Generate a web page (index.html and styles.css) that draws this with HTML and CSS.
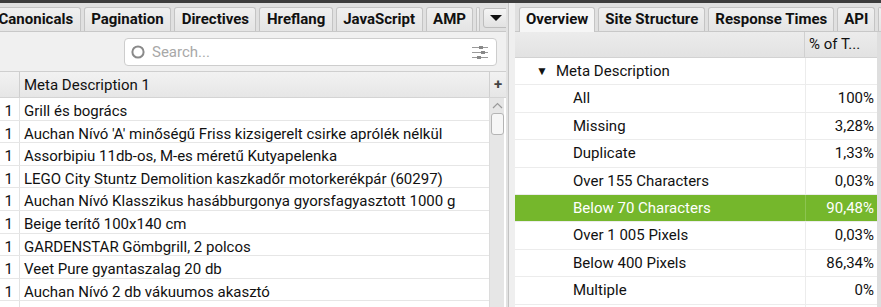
FILE: index.html
```html
<!DOCTYPE html>
<html lang="en">

<head>
    <meta charset="UTF-8">
    <meta name="viewport" content="width=device-width, initial-scale=1.0">
    <title>Meta Description</title>
    <link rel="stylesheet" href="styles.css">
</head>

<body>

    <div class="topbar"></div>

    <div class="main">

        <!-- left pane: data grid -->
        <section class="pane pane-left">
            <div class="tabs">
                <div class="tab tab-cut">Canonicals</div>
                <div class="tab">Pagination</div>
                <div class="tab">Directives</div>
                <div class="tab">Hreflang</div>
                <div class="tab">JavaScript</div>
                <div class="tab">AMP</div>
                <div class="tab tab-sliver"></div>
                <div class="tab-menu"><span class="caret"></span></div>
            </div>

            <div class="toolbar">
                <div class="search">
                    <svg class="search-icon" width="14" height="14" viewBox="0 0 14 14">
                        <circle cx="7" cy="7" r="5.6" fill="none" stroke="#8a8a8a" stroke-width="2"/>
                    </svg>
                    <span class="search-text">Search...</span>
                    <svg class="filter-icon" width="16" height="14" viewBox="0 0 16 14">
                        <g stroke="#9a9a9a" stroke-width="1">
                            <line x1="0" y1="2.5" x2="16" y2="2.5"/>
                            <line x1="0" y1="7.5" x2="16" y2="7.5"/>
                            <line x1="0" y1="12.5" x2="16" y2="12.5"/>
                        </g>
                        <rect x="7" y="1" width="4" height="3" fill="#888"/>
                        <rect x="9" y="6" width="4" height="3" fill="#888"/>
                        <rect x="5" y="11" width="4" height="3" fill="#888"/>
                    </svg>
                </div>
            </div>

            <div class="grid">
                <div class="grid-head">
                    <div class="num"></div>
                    <div class="cell">Meta Description 1</div>
                    <div class="add">+</div>
                </div>
                <div class="grid-body">
                    <div class="rows">
                        <div class="row"><div class="num">1</div><div class="cell">Grill és bogrács</div></div>
                        <div class="row"><div class="num">1</div><div class="cell">Auchan Nívó 'A' minőségű Friss kizsigerelt csirke aprólék nélkül</div></div>
                        <div class="row"><div class="num">1</div><div class="cell">Assorbipiu 11db-os, M-es méretű Kutyapelenka</div></div>
                        <div class="row"><div class="num">1</div><div class="cell">LEGO City Stuntz Demolition kaszkadőr motorkerékpár (60297)</div></div>
                        <div class="row"><div class="num">1</div><div class="cell">Auchan Nívó Klasszikus hasábburgonya gyorsfagyasztott 1000 g</div></div>
                        <div class="row"><div class="num">1</div><div class="cell">Beige terítő 100x140 cm</div></div>
                        <div class="row"><div class="num">1</div><div class="cell">GARDENSTAR Gömbgrill, 2 polcos</div></div>
                        <div class="row"><div class="num">1</div><div class="cell">Veet Pure gyantaszalag 20 db</div></div>
                        <div class="row"><div class="num">1</div><div class="cell">Auchan Nívó 2 db vákuumos akasztó</div></div>
                        <div class="row"><div class="num"></div><div class="cell"></div></div>
                    </div>
                    <div class="vscroll">
                        <svg class="arrow-up" width="11" height="7" viewBox="0 0 11 7">
                            <polyline points="1,6 5.5,1.5 10,6" fill="none" stroke="#9a9a9a" stroke-width="1.2"/>
                        </svg>
                        <div class="thumb"></div>
                    </div>
                </div>
            </div>
        </section>

        <div class="splitter"></div>

        <!-- right pane: overview tree -->
        <section class="pane pane-right">
            <div class="tabs">
                <div class="tab active">Overview</div>
                <div class="tab">Site Structure</div>
                <div class="tab">Response Times</div>
                <div class="tab">API</div>
                <div class="tab tab-sliver"></div>
            </div>

            <div class="tree">
                <div class="tree-head">
                    <div class="name"></div>
                    <div class="value">% of T...</div>
                </div>
                <div class="tree-row group">
                    <div class="name"><span class="toggle">&#9660;</span>Meta Description</div>
                    <div class="value"></div>
                </div>
                <div class="tree-row"><div class="name">All</div><div class="value">100%</div></div>
                <div class="tree-row"><div class="name">Missing</div><div class="value">3,28%</div></div>
                <div class="tree-row"><div class="name">Duplicate</div><div class="value">1,33%</div></div>
                <div class="tree-row"><div class="name">Over 155 Characters</div><div class="value">0,03%</div></div>
                <div class="tree-row selected"><div class="name">Below 70 Characters</div><div class="value">90,48%</div></div>
                <div class="tree-row"><div class="name">Over 1 005 Pixels</div><div class="value">0,03%</div></div>
                <div class="tree-row"><div class="name">Below 400 Pixels</div><div class="value">86,34%</div></div>
                <div class="tree-row"><div class="name">Multiple</div><div class="value">0%</div></div>
                <div class="tree-row"><div class="name"></div><div class="value"></div></div>
            </div>
        </section>

    </div>

</body>

</html>
```

FILE: styles.css
```css
body {
    margin: 0;
    width: 881px;
    height: 307px;
    overflow: hidden;
    font-family: Roboto, "Liberation Sans", sans-serif;
    font-size: 14px;
    color: #111;
    background: #e2e2e2;
}

.topbar {
    height: 3px;
    background: #3d3d3d;
}

.main {
    display: flex;
    height: 304px;
}

.pane {
    display: flex;
    flex-direction: column;
    overflow: hidden;
}

.pane-left {
    width: 506px;
}

.pane-right {
    flex: 1;
}

.splitter {
    width: 6px;
    margin-left: 2px;
    border-left: 1px solid #c4c4c4;
    background: #efefef;
}

/* tab strips */
.tabs {
    display: flex;
    align-items: flex-end;
    gap: 3px;
    height: 28px;
    flex-shrink: 0;
    background: #e0e0e0;
    border-bottom: 1px solid #c8c8c8;
    white-space: nowrap;
}

.tab {
    height: 23px;
    line-height: 23px;
    padding: 0 6px;
    font-size: 15px;
    font-weight: bold;
    background: linear-gradient(#f0f0f0, #e4e4e4);
    border: 1px solid #c4c4c4;
    border-bottom: none;
    border-radius: 3px 3px 0 0;
    flex-shrink: 0;
}

.pane-left .tab {
    padding: 0 6.5px;
}

.pane-left .tab-cut {
    margin-left: -9px;
}

.pane-left .tab-sliver,
.tab-sliver {
    width: 2px;
    padding: 0;
}

.tab.active {
    background: #f6f6f6;
    margin-bottom: -1px;
    height: 24px;
}

.pane-right .tabs {
    padding-left: 4px;
}

.tab-menu {
    align-self: center;
    margin-top: 2px;
    width: 24px;
    height: 18px;
    border: 1px solid #bdbdbd;
    border-radius: 3px;
    background: linear-gradient(#f4f4f4, #e2e2e2);
    display: flex;
    align-items: center;
    justify-content: center;
    flex-shrink: 0;
}

.caret {
    width: 0;
    height: 0;
    border-left: 6px solid transparent;
    border-right: 6px solid transparent;
    border-top: 6px solid #111;
}

/* search toolbar */
.toolbar {
    display: flex;
    justify-content: flex-end;
    height: 40px;
    padding: 6px 9px 0 0;
    box-sizing: border-box;
    background: #f0f0f0;
    border-bottom: 1px solid #cfcfcf;
    flex-shrink: 0;
}

.search {
    display: flex;
    align-items: center;
    width: 373px;
    height: 28px;
    box-sizing: border-box;
    background: #fff;
    border: 1px solid #cdcdcd;
    border-radius: 4px;
    padding: 0 8px 0 6px;
}

.search-icon {
    margin-right: 7px;
}

.search-text {
    flex: 1;
    color: #a8a8a8;
    font-size: 15px;
}

/* data grid */
.grid {
    flex: 1;
    display: flex;
    flex-direction: column;
    background: #fff;
}

.grid-head {
    display: flex;
    height: 25px;
    line-height: 27px;
    background: linear-gradient(#f2f2f2, #e6e6e6);
    border-bottom: 1px solid #d4d4d4;
    flex-shrink: 0;
}

.grid-head .num {
    border-right: 1px solid #cfcfcf;
}

.grid-head .cell {
    font-size: 15px;
}

.add {
    width: 16px;
    border-left: 1px solid #d0d0d0;
    text-align: center;
    font-weight: bold;
    font-size: 15px;
    line-height: 25px;
    color: #444;
}

.grid-body {
    flex: 1;
    display: flex;
    overflow: hidden;
}

.rows {
    flex: 1;
    overflow: hidden;
}

.row {
    display: flex;
    height: 21.6px;
    line-height: 26px;
    border-bottom: 1px solid #e6e6e6;
    white-space: nowrap;
}

.num {
    width: 20px;
    flex-shrink: 0;
    box-sizing: border-box;
    padding-right: 6px;
    text-align: right;
    font-size: 15px;
}

.row .num {
    border-right: 1px solid #e2e2e2;
}

.cell {
    flex: 1;
    padding-left: 4px;
    font-size: 15px;
    overflow: hidden;
}

.vscroll {
    width: 15px;
    margin-right: 2px;
    background: #e6e6e6;
    border-left: 1px solid #dcdcdc;
    display: flex;
    flex-direction: column;
    align-items: center;
    padding-top: 4px;
    box-sizing: border-box;
}

.thumb {
    margin-top: 4px;
    width: 11px;
    height: 20px;
    border: 1px solid #b4b4b4;
    border-radius: 3px;
    background: #f6f6f6;
}

/* overview tree */
.tree {
    flex: 1;
    background: #fff;
    border-right: 4px solid #dedede;
}

.tree-head {
    display: flex;
    height: 25px;
    line-height: 25px;
    background: linear-gradient(#ececec, #e2e2e2);
    border-bottom: 1px solid #d2d2d2;
    font-size: 15px;
}

.tree-head .value {
    text-align: left;
    padding: 0 0 0 4px;
    border-left: 1px solid #d0d0d0;
}

.tree-row {
    display: flex;
    height: 26.4px;
    line-height: 27px;
    border-bottom: 1px solid #ececec;
    font-size: 15px;
}

.name {
    flex: 1;
    padding-left: 58px;
    white-space: nowrap;
}

.group .name {
    padding-left: 21px;
}

.toggle {
    display: inline-block;
    width: 20px;
    font-size: 12px;
    vertical-align: 1px;
}

.value {
    width: 68px;
    padding-right: 3px;
    text-align: right;
    border-left: 1px solid #ececec;
}

.tree-row.selected {
    background: #75b72c;
    color: #fff;
}

.tree-row.selected .value {
    border-left-color: #8cc451;
}
```
